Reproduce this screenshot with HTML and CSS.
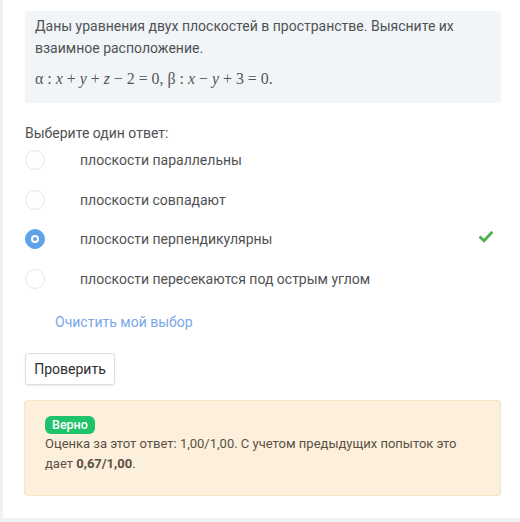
FILE: index.html
```html
<!DOCTYPE html>
<html lang="ru">
<head>
<meta charset="utf-8">
<link rel="stylesheet" href="styles.css">
</head>
<body>
<div class="page">
  <div class="content">
    <div class="qtext">
      <p class="p1">Даны уравнения двух плоскостей в пространстве. Выясните их взаимное расположение.</p>
      <p class="formula"><span class="gr">α</span> : <i>x</i> + <i>y</i> + <i>z</i> − 2 = 0, <span class="gr">β</span> : <i>x</i> − <i>y</i> + 3 = 0.</p>
    </div>
    <div class="ablock">
      <div class="prompt">Выберите один ответ:</div>
      <div class="answers">
        <div class="opt"><span class="radio"></span><span class="lbl">плоскости параллельны</span></div>
        <div class="opt"><span class="radio"></span><span class="lbl">плоскости совпадают</span></div>
        <div class="opt"><span class="radio checked"><span class="dot"></span></span><span class="lbl">плоскости перпендикулярны</span>
          <svg class="tick" width="14" height="12" viewBox="0 0 14 12"><path d="M1.5 6.5 L5 9.8 L12.5 1.8" fill="none" stroke="#4cae4c" stroke-width="2.8" stroke-linecap="square"/></svg>
        </div>
        <div class="opt"><span class="radio"></span><span class="lbl">плоскости пересекаются под острым углом</span></div>
      </div>
      <div class="clear"><a class="clearlink">Очистить мой выбор</a></div>
    </div>
    <div class="actions"><button class="check">Проверить</button></div>
    <div class="feedback">
      <span class="badge">Верно</span>
      <div class="ftext">Оценка за этот ответ: 1,00/1,00. С учетом предыдущих попыток это дает <b>0,67/1,00</b>.</div>
    </div>
  </div>
</div>
</body>
</html>
```
FILE: styles.css
```css
html, body {
  margin: 0;
  padding: 0;
  background: #eef1f3;
}
body {
  font-family: Roboto, "Liberation Sans", sans-serif;
  font-size: 14px;
  color: #4f5254;
}
.page {
  margin-left: 3px;
  height: 518px;
  background: #fff;
  overflow: hidden;
}
.content {
  padding: 11px 19px 0 22px;
  width: 476px;
}
.qtext {
  background: #f2f5f8;
  border-radius: 3px;
  padding: 5px 10px 10px 10px;
  height: 77px;
}
.qtext p {
  margin: 0;
}
.p1 {
  line-height: 21.5px;
  font-size: 14px;
}
.formula {
  margin-top: 10px !important;
  font-family: "Liberation Serif", "DejaVu Serif", serif;
  font-size: 15.9px;
  color: #555;
  line-height: 20px;
}
.formula i {
  font-style: italic;
}
.ablock {
  margin-top: 20px;
}
.prompt {
  font-size: 14px;
  line-height: 20px;
}
.answers {
  margin-top: 7px;
  display: flex;
  flex-direction: column;
  gap: 19.7px;
}
.opt {
  display: flex;
  align-items: center;
  height: 20px;
  position: relative;
  width: 470px;
}
.radio {
  width: 18px;
  height: 18px;
  border: 1px solid #e3e6e8;
  border-radius: 50%;
  background: #fff;
  flex: none;
  display: flex;
  align-items: center;
  justify-content: center;
}
.radio.checked {
  background: #5fa2e8;
  border-color: #5fa2e8;
}
.dot {
  width: 4px;
  height: 4px;
  border-radius: 50%;
  background: #5fa2e8;
  border: 2px solid #fff;
}
.lbl {
  margin-left: 35px;
  font-size: 14px;
}
.tick {
  position: absolute;
  left: 454px;
  top: 2px;
}
.clear {
  margin-top: 23px;
  padding-left: 30px;
}
.clearlink {
  color: #7aa7ea;
  font-size: 14px;
  line-height: 20px;
}
.actions {
  margin-top: 21px;
}
.check {
  font-family: Roboto, "Liberation Sans", sans-serif;
  font-size: 14px;
  color: #2b2e30;
  background: #fff;
  border: 1px solid #dcdfe1;
  border-radius: 3px;
  box-shadow: 0 1px 2px rgba(0,0,0,0.08);
  width: 90px;
  height: 32px;
  padding: 0;
}
.feedback {
  margin-top: 15px;
  margin-left: -1px;
  background: #fcefdc;
  border: 1px solid #fae3c3;
  border-radius: 3px;
  padding: 15px 20px 20px 20px;
  height: 59px;
}
.badge {
  display: inline-block;
  background: #1ec36a;
  color: #fff;
  font-size: 12.5px;
  font-weight: 500;
  line-height: 18px;
  padding: 0 7px;
  border-radius: 6px;
}
.ftext {
  margin-top: 0px;
  font-size: 13px;
  line-height: 20px;
  color: #5b5045;
}
.ftext b {
  font-weight: 700;
}
```
